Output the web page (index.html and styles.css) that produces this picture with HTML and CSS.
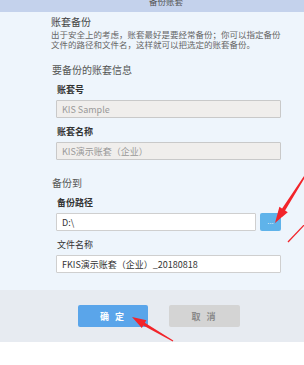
FILE: index.html
```html
<!DOCTYPE html>
<html lang="zh-CN">
<head>
  <meta charset="utf-8">
  <title>备份账套</title>
  <link rel="stylesheet" href="styles.css">
</head>
<body>
  <div class="dialog">
    <div class="titlebar">备份账套</div>
    <div class="content">
      <div class="intro">
        <div class="intro-title">账套备份</div>
        <p class="intro-text">出于安全上的考虑，账套最好是要经常备份；你可以指定备份文件的路径和文件名，这样就可以把选定的账套备份。</p>
      </div>

      <div class="group">
        <div class="group-title">要备份的账套信息</div>
        <div class="field">
          <label class="strong">账套号</label>
          <input type="text" class="readonly" value="KIS Sample" readonly>
        </div>
        <div class="field">
          <label class="strong">账套名称</label>
          <input type="text" class="readonly" value="KIS演示账套（企业）" readonly>
        </div>
      </div>

      <div class="group second">
        <div class="group-title">备份到</div>
        <div class="field">
          <label class="strong">备份路径</label>
          <div class="path-row">
            <input type="text" value="D:\">
            <button type="button" class="browse">...</button>
          </div>
        </div>
        <div class="field">
          <label>文件名称</label>
          <input type="text" value="FKIS演示账套（企业）_20180818">
        </div>
      </div>
    </div>

    <div class="footer">
      <button type="button" class="btn ok">确 定</button>
      <button type="button" class="btn cancel">取 消</button>
    </div>
  </div>

  <!-- 标注箭头 -->
  <svg class="marks" width="304" height="365" viewBox="0 0 304 365">
    <polygon fill="#f2242a" points="310.4,168.3 285.1,210.5 287.8,212.2 275,223 279.4,206.8 282.1,208.5 309.6,167.7"/>
    <line x1="306" y1="223" x2="288" y2="242" stroke="#f2242a" stroke-width="1.3"/>
    <polygon fill="#f2242a" points="173.3,340.6 144.8,322.8 146.4,320.2 132,317 141.8,328 143.3,325.4 172.8,341.4"/>
  </svg>
</body>
</html>
```

FILE: styles.css
```css
body {
  margin: 0;
  padding: 0;
  background-color: #fff;
  font-family: "Noto Sans CJK SC", "Liberation Sans", sans-serif;
}
.dialog {
  width: 304px;
  background-color: #eef5fc;
}
.titlebar {
  height: 12px;
  line-height: 3px;
  padding-left: 28px;
  text-align: center;
  font-size: 8.5px;
  color: #555;
  background-color: #c4d2ec;
  overflow: hidden;
}
.content {
  padding-left: 51px;
  padding-bottom: 17px;
}
.intro-title {
  margin-top: 4px;
  font-size: 10px;
  line-height: 12px;
  color: #444;
}
.intro-text {
  margin: 1px 0 0 0;
  width: 232px;
  font-size: 8.5px;
  line-height: 10px;
  color: #666;
}
.group-title {
  margin-top: 15px;
  margin-left: 1px;
  font-size: 10px;
  line-height: 12px;
  color: #555;
}
.group.second .group-title {
  margin-top: 17px;
}
.field {
  margin-top: 8px;
  padding-left: 5px;
  width: 225px;
}
label {
  display: block;
  margin-left: 1px;
  margin-bottom: 5px;
  font-size: 9px;
  line-height: 11px;
  color: #333;
}
label.strong {
  font-weight: bold;
}
input[type="text"] {
  display: block;
  width: 100%;
  height: 18px;
  margin: 0;
  padding: 0 5px;
  box-sizing: border-box;
  border: 1px solid #cfcfcf;
  border-radius: 1px;
  background-color: #fff;
  font-family: inherit;
  font-size: 9px;
  color: #333;
  outline: none;
}
input.readonly {
  background-color: #f0eeec;
  border-color: #c9c9c9;
  color: #999;
}
.path-row {
  display: flex;
  gap: 4px;
}
.path-row input[type="text"] {
  width: 200px;
}
.browse {
  width: 21px;
  height: 18px;
  padding: 0;
  border: none;
  border-radius: 2px;
  background-color: #5fb3ea;
  color: #fff;
  font-size: 8px;
  line-height: 14px;
  cursor: pointer;
}
.footer {
  display: flex;
  gap: 21px;
  height: 52px;
  box-sizing: border-box;
  padding: 15px 0 0 78px;
  background-color: #e7ebf1;
}
.btn {
  width: 70px;
  height: 22px;
  padding: 0;
  border: none;
  border-radius: 2px;
  font-family: inherit;
  font-size: 9px;
  font-weight: bold;
  letter-spacing: 2px;
  cursor: pointer;
}
.btn.ok {
  background-color: #5aa5ea;
  color: #fff;
}
.btn.cancel {
  width: 71px;
  background-color: #d4d4d4;
  color: #8a8a8a;
}
.marks {
  position: absolute;
  left: 0;
  top: 0;
  pointer-events: none;
}
```
